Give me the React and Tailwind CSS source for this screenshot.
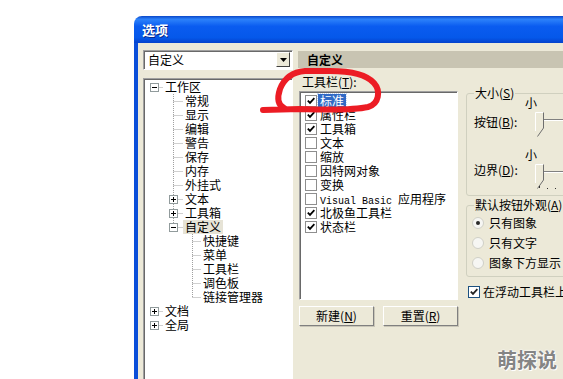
import React from 'react';

// tree connector cell (dotted lines + optional expander box)
function Gutter({ w, k, e }) {
  const cx = Math.floor(w / 2) + 0.5;
  const dot = { stroke: '#A0A0A0', strokeDasharray: '1 1', strokeWidth: 1 };
  return (
    <svg width={w} height="14" className="shrink-0">
      {(k === 'mid' || k === 'pass') && <line x1={cx} y1="0" x2={cx} y2="14" {...dot} />}
      {k === 'last' && <line x1={cx} y1="0" x2={cx} y2="7" {...dot} />}
      {(k === 'mid' || k === 'last' || k === 'stub') && <line x1={cx} y1="7.5" x2={w} y2="7.5" {...dot} />}
      {e && (
        <g transform={`translate(${cx - 4.5},3)`}>
          <rect x="0.5" y="0.5" width="8" height="8" fill="#fff" stroke="#919B9C" />
          <path d="M2 4.5h5" stroke="#000" />
          {e === 'closed' && <path d="M4.5 2v5" stroke="#000" />}
        </g>
      )}
    </svg>
  );
}

const R = { w: 18 };
const L1 = { w: 20 };
const tree = [
  { t: '工作区', g: [{ w: 18, k: 'stub', e: 'open' }] },
  ...['常规', '显示', '编辑', '警告', '保存', '内存', '外挂式'].map((t) => ({ t, g: [R, { w: 20, k: 'mid' }] })),
  { t: '文本', g: [R, { w: 20, k: 'mid', e: 'closed' }] },
  { t: '工具箱', g: [R, { w: 20, k: 'mid', e: 'closed' }] },
  { t: '自定义', g: [R, { w: 20, k: 'last', e: 'open' }], sel: true },
  ...['快捷键', '菜单', '工具栏', '调色板'].map((t) => ({ t, g: [R, L1, { w: 18, k: 'mid' }] })),
  { t: '链接管理器', g: [R, L1, { w: 18, k: 'last' }] },
  { t: '文档', g: [{ w: 18, k: 'stub', e: 'closed' }] },
  { t: '全局', g: [{ w: 18, k: 'stub', e: 'closed' }] },
];

const bars = [
  { t: '标准', on: true, sel: true },
  { t: '属性栏', on: true },
  { t: '工具箱', on: true },
  { t: '文本' },
  { t: '缩放' },
  { t: '因特网对象' },
  { t: '变换' },
  { t: 'vb' },
  { t: '北极鱼工具栏', on: true },
  { t: '状态栏', on: true },
];

function Check({ on }) {
  return (
    <span className="w-[12px] h-[12px] shrink-0 bg-white border border-[#8E8E8E] flex items-center justify-center">
      {on && (
        <svg width="8" height="8" viewBox="0 0 8 8">
          <path d="M0.8 3.6l2.2 2.3 4.4-4.8" stroke="#000" strokeWidth="1.8" fill="none" />
        </svg>
      )}
    </span>
  );
}

function Radio({ on }) {
  return (
    <svg width="12" height="12" viewBox="0 0 12 12" className="shrink-0">
      <circle cx="6" cy="6" r="5.5" fill="#F6F6F3" stroke="#CFCFC6" />
      {on && <circle cx="6" cy="6" r="2" fill="#2A2A2A" />}
    </svg>
  );
}

function Slider({ ticks }) {
  return (
    <svg width="40" height="29" viewBox="0 0 40 29" className="shrink-0">
      <line x1="19" y1="10.5" x2="40" y2="10.5" stroke="#808080" />
      <line x1="19" y1="11.5" x2="40" y2="11.5" stroke="#fff" />
      <path d="M10 3H19V19L13 27L10 22Z" fill="#ECE9D8" />
      <path d="M10.5 22V3.5H18.5" stroke="#fff" fill="none" />
      <path d="M18.5 3.5V19L12.5 27.5" stroke="#6E6E6E" fill="none" />
      {ticks && (
        <g fill="#333">
          <rect x="14" y="25" width="1" height="2" />
          <rect x="22" y="27" width="1" height="1" />
          <rect x="30" y="27" width="1" height="1" />
          <rect x="38" y="27" width="1" height="1" />
        </g>
      )}
    </svg>
  );
}

export default function App() {
  return (
    <div className="relative w-[563px] h-[379px] overflow-hidden bg-white font-['Noto_Sans_CJK_SC','Noto_Sans',sans-serif] text-[12px] leading-[14px] text-black">
      <div className="ml-[134px] mt-[16px] w-[480px] flex flex-col">
        {/* title bar */}
        <div className="h-[27px] rounded-tl-[8px] bg-[linear-gradient(180deg,#0A47C9_0%,#2D82FA_12%,#0A5CF0_38%,#0558EA_80%,#0442CC_100%)] flex items-center pl-[8px] text-white font-bold text-[13px] [text-shadow:1px_1px_0_#0A2A8A]">
          选项
        </div>

        <div className="flex h-[340px] border-l-[4px] border-l-[#0A4ED9] bg-[#ECE9D8] pl-[5px] pt-[7px]">
          {/* left column */}
          <div className="w-[150px] shrink-0 flex flex-col gap-[8px]">
            <div className="h-[20px] bg-white border border-t-[#A0A0A0] border-l-[#A0A0A0] border-r-white border-b-white shadow-[inset_1px_1px_0_#696969] flex items-center justify-between pl-[4px] pr-[2px]">
              <span>自定义</span>
              <span className="w-[14px] h-[15px] bg-[#ECE9D8] border border-t-white border-l-white border-r-[#404040] border-b-[#404040] flex items-center justify-center">
                <svg width="7" height="4" viewBox="0 0 7 4">
                  <path d="M0 0h7L3.5 4z" fill="#000" />
                </svg>
              </span>
            </div>
            <div className="h-[310px] bg-white border border-t-[#A0A0A0] border-l-[#A0A0A0] border-r-white border-b-white shadow-[inset_1px_1px_0_#696969] p-px">
              {tree.map((r, i) => (
                <div key={i} className="flex h-[14px] items-center">
                  {r.g.map((g, j) => (
                    <Gutter key={j} {...g} />
                  ))}
                  <span className={`inline-block h-[14px] px-[2px] leading-[14px] ${r.sel ? 'bg-[#E6E3D6]' : ''}`}>{r.t}</span>
                </div>
              ))}
            </div>
          </div>

          {/* right column */}
          <div className="ml-[5px] flex-1 flex flex-col">
            <div className="mt-px h-[17px] bg-[#C8C4B2] pl-[9px] font-bold leading-[17px]">自定义</div>
            <div className="flex">
              <div className="ml-px w-[159px] shrink-0 flex flex-col">
                <div className="mt-[7px] h-[14px] pl-[3px]">
                  工具栏(<u>T</u>):
                </div>
                <div className="mt-[2px] h-[209px] bg-white border border-t-[#A0A0A0] border-l-[#A0A0A0] border-r-white border-b-white shadow-[inset_1px_1px_0_#696969] pt-[2px] pl-[5px]">
                  {bars.map((b, i) => (
                    <div key={i} className="flex items-center h-[14px]">
                      <Check on={b.on} />
                      {b.t === 'vb' ? (
                        <span className="inline-block h-[14px] ml-[1px] px-[2px]">
                          <span className="font-['Liberation_Mono',monospace] text-[10px]">Visual Basic </span>应用程序
                        </span>
                      ) : (
                        <span
                          className={`inline-block h-[14px] ml-[1px] px-[2px] ${b.sel ? 'bg-[#316AC5] text-white outline outline-1 outline-dotted outline-[#C9D8F0]' : ''}`}
                        >
                          {b.t}
                        </span>
                      )}
                    </div>
                  ))}
                </div>
                <div className="mt-[6px] flex gap-[9px]">
                  <button className="w-[75px] h-[20px] bg-[#ECE9D8] border border-t-white border-l-white border-r-[#808080] border-b-[#808080] shadow-[1px_1px_0_#C9C6B8] flex items-center justify-center">
                    新建(<u>N</u>)
                  </button>
                  <button className="w-[75px] h-[20px] bg-[#ECE9D8] border border-t-white border-l-white border-r-[#808080] border-b-[#808080] shadow-[1px_1px_0_#C9C6B8] flex items-center justify-center">
                    重置(<u>R</u>)
                  </button>
                </div>
              </div>

              <div className="ml-[8px] flex-1 flex flex-col">
                <fieldset className="mt-[18px] border border-[#D0D0BF] rounded-[3px] px-[7px] pb-[5px]">
                  <legend className="px-[1px] leading-[14px]">
                    大小(<u>S</u>)
                  </legend>
                  <div className="-mt-[3px] h-[43px] flex">
                    <div className="w-[51px] mt-[19px] leading-[12px]">
                      按钮(<u>B</u>):
                    </div>
                    <div className="flex flex-col">
                      <div className="h-[12px] leading-[12px]">小</div>
                      <Slider />
                    </div>
                  </div>
                  <div className="mt-[9px] h-[41px] flex">
                    <div className="w-[51px] mt-[15px] leading-[12px]">
                      边界(<u>D</u>):
                    </div>
                    <div className="flex flex-col">
                      <div className="h-[12px] leading-[12px]">小</div>
                      <Slider ticks />
                    </div>
                  </div>
                </fieldset>

                <fieldset className="mt-[2px] border border-[#D0D0BF] rounded-[3px] px-[7px] pt-[1px] pb-[3px]">
                  <legend className="px-[1px] leading-[14px]">
                    默认按钮外观(<u>A</u>)
                  </legend>
                  {[
                    ['只有图象', true],
                    ['只有文字', false],
                    ['图象下方显示', false],
                  ].map(([t, on]) => (
                    <div key={t} className="h-[20px] flex items-center -ml-[2px] gap-[5px]">
                      <Radio on={on} />
                      <span className="whitespace-nowrap">{t}</span>
                    </div>
                  ))}
                </fieldset>

                <div className="mt-[8px] h-[14px] ml-[2px] flex items-center gap-[3px] whitespace-nowrap">
                  <span className="w-[12px] h-[12px] bg-white border border-[#1C5180] flex items-center justify-center">
                    <svg width="8" height="8" viewBox="0 0 8 8">
                      <path d="M0.8 3.6l2.2 2.3 4.4-4.8" stroke="#222" strokeWidth="1.8" fill="none" />
                    </svg>
                  </span>
                  在浮动工具栏上显示
                </div>
              </div>
            </div>
          </div>
        </div>
      </div>

      {/* red hand-drawn annotation */}
      <svg className="absolute left-0 top-0 pointer-events-none" width="563" height="379">
        <path
          d="M263 110 L300 109 C330 110 355 110 368 107 C379 104 381 91 374 83 C366 74 350 71 330 71 L305 71 C292 72 284 79 280 89 C277 98 278 105 284 108"
          stroke="#EC1C24"
          strokeWidth="6"
          strokeLinecap="round"
          strokeLinejoin="round"
          fill="none"
        />
      </svg>

      {/* watermark */}
      <div className="absolute right-[6px] bottom-[9px] text-[20px] leading-[20px] font-bold text-[#858585] [text-shadow:0_0_2px_#fff,0_0_2px_#fff,1px_1px_0_#fff]">
        萌探说
      </div>
    </div>
  );
}
